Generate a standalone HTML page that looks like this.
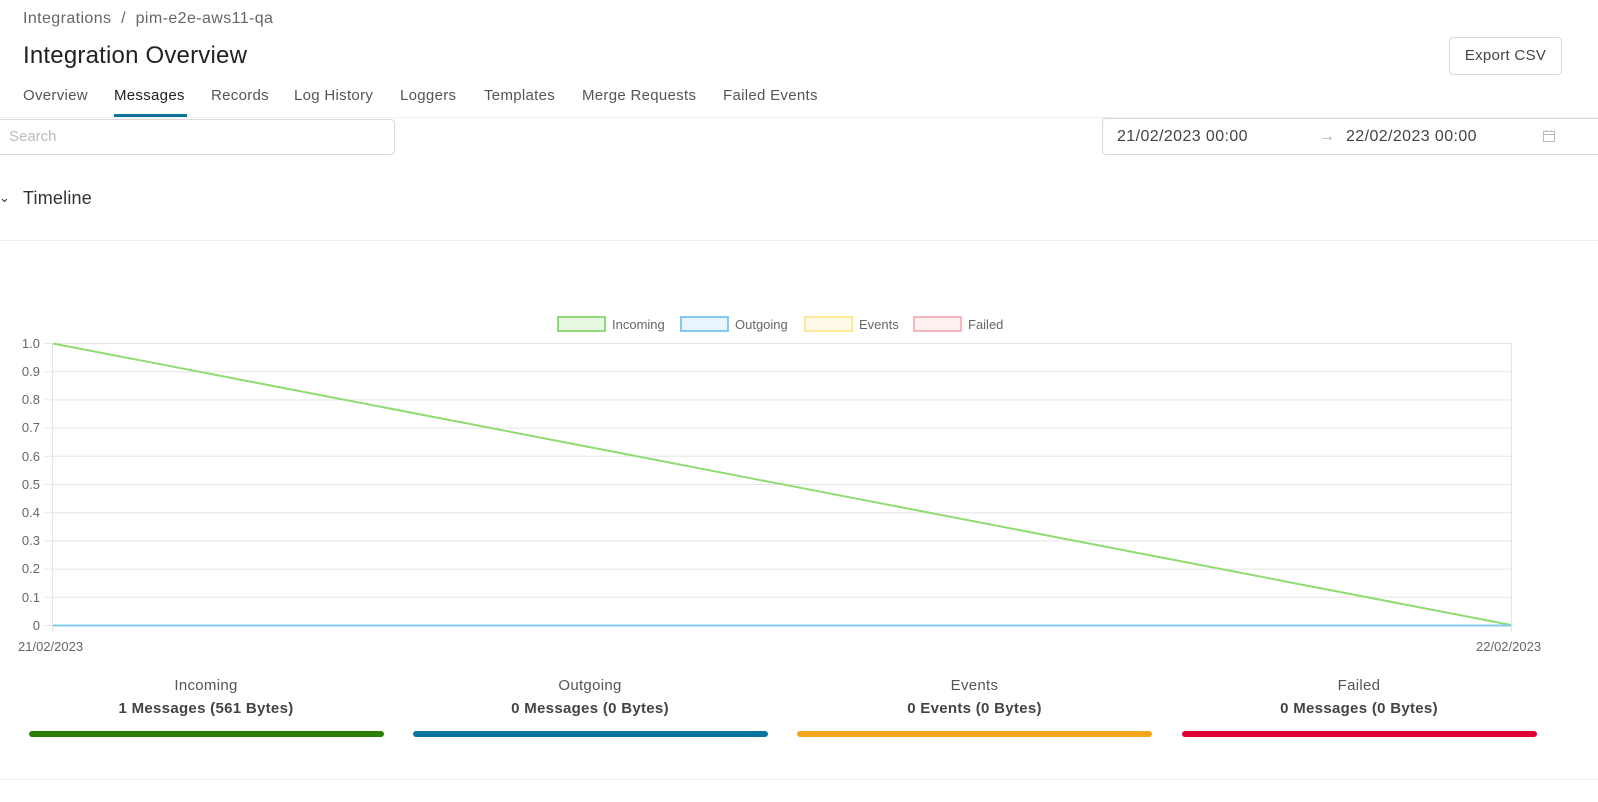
<!DOCTYPE html>
<html><head><meta charset="utf-8"><style>
*{margin:0;padding:0;box-sizing:border-box}
body{width:1598px;height:802px;overflow:hidden;background:#fff;font-family:"Liberation Sans",sans-serif;color:#333;position:relative}
.a{position:absolute;white-space:nowrap}
.t{font-size:15px;color:#555;letter-spacing:0.3px;top:87px}
</style></head><body>
<div class="a" style="left:23px;top:10px;font-size:16px;color:#666;letter-spacing:0.4px">Integrations&nbsp; /&nbsp; pim-e2e-aws11-qa</div>
<div class="a" style="left:23px;top:42px;font-size:24px;color:#222;letter-spacing:0.2px">Integration Overview</div>
<div class="a" style="left:1449px;top:37px;width:113px;height:38px;border:1px solid #d9d9d9;border-radius:4px;font-size:15px;color:#444;text-align:center;line-height:36px;letter-spacing:0.3px">Export CSV</div>
<div class="a t" style="left:23px">Overview</div>
<div class="a t" style="left:114px;color:#222">Messages</div>
<div class="a" style="left:114px;top:114px;width:73px;height:3px;background:#10739e"></div>
<div class="a t" style="left:211px">Records</div>
<div class="a t" style="left:294px">Log History</div>
<div class="a t" style="left:400px">Loggers</div>
<div class="a t" style="left:484px">Templates</div>
<div class="a t" style="left:582px">Merge Requests</div>
<div class="a t" style="left:723px">Failed Events</div>
<div class="a" style="left:0;top:117px;width:1598px;height:1px;background:#eee"></div>
<div class="a" style="left:-4px;top:119px;width:399px;height:36px;border:1px solid #d9d9d9;border-radius:4px;font-size:15px;color:#bbb;padding-left:12px;line-height:34px">Search</div>
<div class="a" style="left:1102px;top:118px;width:510px;height:37px;border:1px solid #d9d9d9;border-radius:4px;font-size:16px;color:#444;line-height:35px;letter-spacing:0.4px">
<span class="a" style="left:14px">21/02/2023 00:00</span><span class="a" style="left:216px;color:#aaa">→</span><span class="a" style="left:243px">22/02/2023 00:00</span>
<svg class="a" style="left:439px;top:10px" width="14" height="14" viewBox="0 0 14 14" fill="none" stroke="#bbb"><rect x="1.5" y="2.5" width="11" height="10"/><line x1="1.5" y1="5.5" x2="12.5" y2="5.5"/><line x1="4.5" y1="1" x2="4.5" y2="3"/><line x1="9.5" y1="1" x2="9.5" y2="3"/></svg></div>
<div class="a" style="left:-1px;top:190px;font-size:13px;color:#333">⌄</div>
<div class="a" style="left:23px;top:188px;font-size:18px;color:#333;letter-spacing:0.2px">Timeline</div>
<div class="a" style="left:0;top:240px;width:1598px;height:1px;background:#eee"></div>
<svg class="a" style="left:0;top:300px" width="1598" height="360" font-family="Liberation Sans,sans-serif" font-size="13" fill="#666">
<g stroke="#e5e5e5" stroke-width="1">
<line x1="45" y1="43.5" x2="1511" y2="43.5"/><line x1="45" y1="71.7" x2="1511" y2="71.7"/><line x1="45" y1="99.9" x2="1511" y2="99.9"/><line x1="45" y1="128.1" x2="1511" y2="128.1"/><line x1="45" y1="156.3" x2="1511" y2="156.3"/><line x1="45" y1="184.5" x2="1511" y2="184.5"/><line x1="45" y1="212.7" x2="1511" y2="212.7"/><line x1="45" y1="240.9" x2="1511" y2="240.9"/><line x1="45" y1="269.1" x2="1511" y2="269.1"/><line x1="45" y1="297.3" x2="1511" y2="297.3"/><line x1="45" y1="325.5" x2="1511" y2="325.5"/>
<line x1="52.5" y1="43" x2="52.5" y2="332"/><line x1="1511.5" y1="43" x2="1511.5" y2="332"/></g>
<g text-anchor="end"><text x="40" y="48">1.0</text><text x="40" y="76">0.9</text><text x="40" y="104">0.8</text><text x="40" y="132">0.7</text><text x="40" y="161">0.6</text><text x="40" y="189">0.5</text><text x="40" y="217">0.4</text><text x="40" y="245">0.3</text><text x="40" y="273">0.2</text><text x="40" y="302">0.1</text><text x="40" y="330">0</text></g>
<text x="18" y="351">21/02/2023</text><text x="1476" y="351">22/02/2023</text>
<line x1="53" y1="43.5" x2="1511" y2="325" stroke="#8fdc73" stroke-width="2"/>
<line x1="53" y1="325.5" x2="1511" y2="325.5" stroke="#84c9f3" stroke-width="2"/>
<rect x="558" y="17" width="47" height="14" fill="#e8f7e2" stroke="#8fdc73" stroke-width="2"/><text x="612" y="29">Incoming</text>
<rect x="681" y="17" width="47" height="14" fill="#eaf5fd" stroke="#84c9f3" stroke-width="2"/><text x="735" y="29">Outgoing</text>
<rect x="805" y="17" width="47" height="14" fill="#fffbe8" stroke="#fde99a" stroke-width="2"/><text x="859" y="29">Events</text>
<rect x="914" y="17" width="47" height="14" fill="#fff0f1" stroke="#fbb4ba" stroke-width="2"/><text x="968" y="29">Failed</text>
</svg>
<div class="a" style="left:29px;top:677px;width:354px;text-align:center;font-size:15px;color:#555;letter-spacing:0.3px">Incoming</div>
<div class="a" style="left:29px;top:700px;width:354px;text-align:center;font-size:15px;color:#444;font-weight:bold;letter-spacing:0.3px">1 Messages (561 Bytes)</div>
<div class="a" style="left:29px;top:731px;width:355px;height:6px;border-radius:3px;background:#2b7d04"></div>
<div class="a" style="left:413px;top:677px;width:354px;text-align:center;font-size:15px;color:#555;letter-spacing:0.3px">Outgoing</div>
<div class="a" style="left:413px;top:700px;width:354px;text-align:center;font-size:15px;color:#444;font-weight:bold;letter-spacing:0.3px">0 Messages (0 Bytes)</div>
<div class="a" style="left:413px;top:731px;width:355px;height:6px;border-radius:3px;background:#0a74a0"></div>
<div class="a" style="left:797px;top:677px;width:355px;text-align:center;font-size:15px;color:#555;letter-spacing:0.3px">Events</div>
<div class="a" style="left:797px;top:700px;width:355px;text-align:center;font-size:15px;color:#444;font-weight:bold;letter-spacing:0.3px">0 Events (0 Bytes)</div>
<div class="a" style="left:797px;top:731px;width:355px;height:6px;border-radius:3px;background:#f5a51b"></div>
<div class="a" style="left:1182px;top:677px;width:354px;text-align:center;font-size:15px;color:#555;letter-spacing:0.3px">Failed</div>
<div class="a" style="left:1182px;top:700px;width:354px;text-align:center;font-size:15px;color:#444;font-weight:bold;letter-spacing:0.3px">0 Messages (0 Bytes)</div>
<div class="a" style="left:1182px;top:731px;width:355px;height:6px;border-radius:3px;background:#e00034"></div>
<div class="a" style="left:0;top:779px;width:1598px;height:1px;background:#eee"></div>
</body></html>
